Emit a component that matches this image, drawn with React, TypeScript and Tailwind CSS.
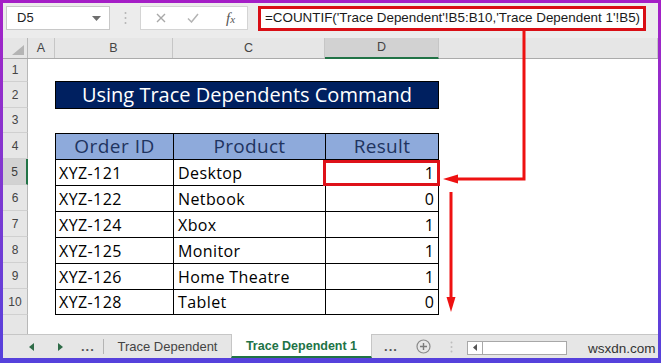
import React from 'react';

const comic = "font-['Open_Sans',sans-serif]";

const rows = [
  { n: 1, h: 'h-[23px]' },
  { n: 2, h: 'h-[26px]' },
  { n: 3, h: 'h-[25px]' },
  { n: 4, h: 'h-[26px]' },
  { n: 5, h: 'h-[26px]' },
  { n: 6, h: 'h-[26px]' },
  { n: 7, h: 'h-[26px]' },
  { n: 8, h: 'h-[26px]' },
  { n: 9, h: 'h-[26px]' },
  { n: 10, h: 'h-[26px]' },
];

const orders: Record<number, [string, string, number]> = {
  5: ['XYZ-121', 'Desktop', 1],
  6: ['XYZ-122', 'Netbook', 0],
  7: ['XYZ-124', 'Xbox', 1],
  8: ['XYZ-125', 'Monitor', 1],
  9: ['XYZ-126', 'Home Theatre', 1],
  10: ['XYZ-128', 'Tablet', 0],
};

function RowHead({ n, selected }: { n?: number; selected?: boolean }) {
  return (
    <div
      className={
        selected
          ? 'flex w-[25px] shrink-0 items-center justify-center border-b border-r-2 border-b-[#d0d0d0] border-r-[#217346] bg-[#d2d2d2] text-[12px] text-[#3b3b3b]'
          : 'flex w-[25px] shrink-0 items-center justify-center border-b border-r border-b-[#d0d0d0] border-r-[#b8b8b8] bg-[#e6e6e6] text-[12px] text-[#444]'
      }
    >
      {n}
    </div>
  );
}

function FormulaBar() {
  return (
    <div className="flex h-[35px] shrink-0 items-start bg-[#ececec] pt-[3px]">
      <div className="ml-[3px] flex h-[24px] w-[104px] items-center justify-between border border-[#c8c8c8] bg-white pl-[10px] pr-[8px]">
        <span className="text-[13px] text-[#222]">D5</span>
        <svg width="9" height="5" viewBox="0 0 9 5">
          <path d="M0 0h9L4.5 5z" fill="#6e6e6e" />
        </svg>
      </div>
      <div className="flex h-[24px] w-[30px] items-center justify-center">
        <svg width="3" height="14" viewBox="0 0 3 14">
          <circle cx="1.5" cy="2" r="1" fill="#b4b4b4" />
          <circle cx="1.5" cy="7" r="1" fill="#b4b4b4" />
          <circle cx="1.5" cy="12" r="1" fill="#b4b4b4" />
        </svg>
      </div>
      <div className="relative flex h-[24px] w-[108px] items-center border border-[#d4d4d4] bg-white">
        <svg className="ml-[15px]" width="10" height="10" viewBox="0 0 10 10">
          <path d="M1 1l8 8M9 1l-8 8" stroke="#a8a8a8" strokeWidth="1.4" />
        </svg>
        <svg className="ml-[21px]" width="12" height="10" viewBox="0 0 12 10">
          <path d="M1 5.5l3.5 3.5L11 1" stroke="#b4b4b4" strokeWidth="1.5" fill="none" />
        </svg>
        <span className="ml-[27px] font-['Liberation_Serif',serif] text-[15px] italic text-[#555]">
          f<span className="text-[11px]">x</span>
        </span>
      </div>
      <div className="ml-[10px] flex h-[25px] w-[388px] items-center overflow-hidden whitespace-nowrap border-[3px] border-[#d90e15] bg-white pl-[4px] text-[13.4px] text-[#1a1a1a]">
        =COUNTIF('Trace Dependent'!B5:B10,'Trace Dependent 1'!B5)
      </div>
    </div>
  );
}

function ColumnHeaders() {
  return (
    <div className="flex h-[21px] shrink-0 border-b border-[#ababab] bg-[#e6e6e6] text-[12.5px] text-[#444]">
      <div className="flex w-[25px] shrink-0 items-end justify-end border-r border-[#b8b8b8] pb-[3px] pr-[3px]">
        <svg width="12" height="10" viewBox="0 0 12 10">
          <polygon points="12,0 12,10 0,10" fill="#b4b4b4" />
        </svg>
      </div>
      <div className="flex w-[27px] shrink-0 items-center justify-center border-r border-[#c6c6c6]">A</div>
      <div className="flex w-[118px] shrink-0 items-center justify-center border-r border-[#c6c6c6]">B</div>
      <div className="flex w-[152px] shrink-0 items-center justify-center border-r border-[#c6c6c6]">C</div>
      <div className="-mb-px flex w-[114px] shrink-0 items-center justify-center border-b-2 border-r border-b-[#217346] border-r-[#c6c6c6] bg-[#d2d2d2]">
        D
      </div>
      <div className="flex-1 border-r border-[#c6c6c6]" />
    </div>
  );
}

function SheetTabs() {
  return (
    <div className="flex h-[24px] shrink-0 items-stretch border-t border-[#c6c6c6] bg-[#e6e6e6] text-[13px] text-[#444]">
      <div className="flex w-[100px] shrink-0 items-center">
        <svg className="ml-[26px]" width="5" height="8" viewBox="0 0 5 8">
          <path d="M5 0v8L0 4z" fill="#2e6b47" />
        </svg>
        <svg className="ml-[24px]" width="5" height="8" viewBox="0 0 5 8">
          <path d="M0 0v8l5-4z" fill="#2e6b47" />
        </svg>
        <span className="ml-[18px] text-[13px] font-bold leading-none tracking-[1px] text-[#555]">...</span>
      </div>
      <div className="my-[4px] w-px shrink-0 bg-[#b4b4b4]" />
      <div className="flex w-[127px] shrink-0 items-center justify-center">Trace Dependent</div>
      <div className="-mt-px flex w-[141px] shrink-0 items-center justify-center border-b-2 border-l border-r border-b-[#217346] border-l-[#c6c6c6] border-r-[#c6c6c6] bg-white pt-[2px] text-[12.5px] font-bold text-[#217346]">
        Trace Dependent 1
      </div>
      <div className="flex w-[38px] shrink-0 items-center justify-center text-[13px] font-bold tracking-[1px] text-[#555]">...</div>
      <div className="flex w-[26px] shrink-0 items-center justify-center">
        <svg width="15" height="15" viewBox="0 0 15 15">
          <circle cx="7.5" cy="7.5" r="6.5" stroke="#8a8a8a" strokeWidth="1.2" fill="none" />
          <path d="M7.5 4v7M4 7.5h7" stroke="#7a7a7a" strokeWidth="1.4" />
        </svg>
      </div>
      <div className="flex w-[31px] shrink-0 items-center justify-center">
        <svg width="3" height="12" viewBox="0 0 3 12">
          <circle cx="1.5" cy="1.5" r="1" fill="#bdbdbd" />
          <circle cx="1.5" cy="6" r="1" fill="#bdbdbd" />
          <circle cx="1.5" cy="10.5" r="1" fill="#bdbdbd" />
        </svg>
      </div>
      <div className="flex items-center pt-[2px]">
        <div className="flex h-[14px] w-[100px] border border-[#a8a8a8] bg-white">
          <div className="flex w-[15px] items-center justify-center border-r border-[#a8a8a8]">
            <svg width="4" height="7" viewBox="0 0 4 7">
              <path d="M4 0v7L0 3.5z" fill="#555" />
            </svg>
          </div>
        </div>
      </div>
      <div className="ml-[21px] flex items-center pt-[5px] text-[13.5px] text-[#333]">wsxdn.com</div>
    </div>
  );
}

export default function App() {
  return (
    <div className="relative h-[363px] w-[661px] overflow-hidden bg-gradient-to-b from-[#a51ec6] to-[#5541dc] pb-[5px] pl-[3px] pr-[3px] pt-[3px] font-['Liberation_Sans',sans-serif]">
      <div className="flex h-full flex-col bg-white">
        <FormulaBar />
        <ColumnHeaders />

        {rows.map((r) => (
          <div key={r.n} className={`flex shrink-0 ${r.h}`}>
            <RowHead n={r.n} selected={r.n === 5} />
            <div className="w-[27px] shrink-0" />
            {r.n === 2 && (
              <div
                className={`-mt-px flex h-[28px] w-[384px] shrink-0 items-center justify-center self-start border border-black bg-[#002060] text-[20px] text-white ${comic}`}
              >
                Using Trace Dependents Command
              </div>
            )}
            {r.n === 4 && (
              <>
                <div className={`flex w-[118px] shrink-0 items-center justify-center border-l border-t border-black bg-[#8eaadb] text-[19px] tracking-[0.5px] text-[#1f3460] ${comic}`}>
                  Order ID
                </div>
                <div className={`flex w-[152px] shrink-0 items-center justify-center border-l border-t border-black bg-[#8eaadb] text-[19px] tracking-[0.3px] text-[#1f3460] ${comic}`}>
                  Product
                </div>
                <div className={`flex w-[114px] shrink-0 items-center justify-center border-l border-r border-t border-black bg-[#8eaadb] text-[19px] tracking-[0.3px] text-[#1f3460] ${comic}`}>
                  Result
                </div>
              </>
            )}
            {orders[r.n] && (
              <>
                <div className={`flex w-[118px] shrink-0 items-center border-l border-t border-black pl-[3px] text-[16px] tracking-[0.4px] text-black ${r.n === 10 ? 'border-b' : ''} ${comic}`}>
                  {orders[r.n][0]}
                </div>
                <div className={`flex w-[152px] shrink-0 items-center border-l border-t border-black pl-[4px] text-[16px] tracking-[0.4px] text-black ${r.n === 10 ? 'border-b' : ''} ${comic}`}>
                  {orders[r.n][1]}
                </div>
                <div className={`flex w-[114px] shrink-0 items-center justify-end border-l border-r border-t border-black pr-[4px] text-[16px] text-black ${r.n === 10 ? 'border-b' : ''} ${comic}`}>
                  {orders[r.n][2]}
                </div>
              </>
            )}
            <div className="flex-1" />
          </div>
        ))}

        {/* row 11, cut off by the tab bar */}
        <div className="flex min-h-0 flex-1">
          <div className="w-[25px] shrink-0 border-r border-[#b8b8b8] bg-[#e6e6e6]" />
          <div className="flex-1" />
        </div>

        <SheetTabs />
      </div>

      {/* trace arrows */}
      <svg className="pointer-events-none absolute left-0 top-0" width="661" height="363" viewBox="0 0 661 363">
        <path d="M524 31V179H456" stroke="#ee1111" strokeWidth="3" fill="none" />
        <polygon points="443,179 458,174.5 458,183.5" fill="#ee1111" />
        <path d="M451 192V299" stroke="#ee1111" strokeWidth="3" fill="none" />
        <polygon points="451,312 446.5,297 455.5,297" fill="#ee1111" />
      </svg>
      <div className="pointer-events-none absolute left-[323px] top-[160px] h-[26px] w-[117px] border-[3px] border-[#de1119]" />
    </div>
  );
}
